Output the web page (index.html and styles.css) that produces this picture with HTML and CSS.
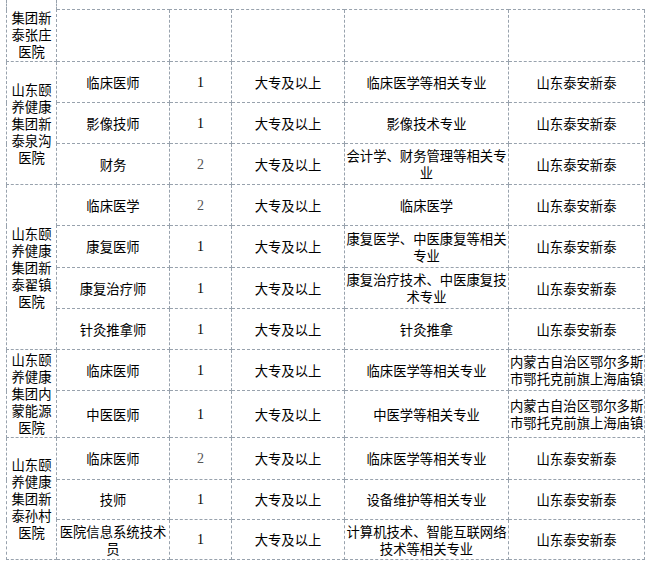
FILE: index.html
```html
<!DOCTYPE html>
<html lang="zh-CN">
<head>
<meta charset="utf-8">
<title>招聘岗位表</title>
<link rel="stylesheet" href="styles.css">
</head>
<body>
<table class="jobs">
  <colgroup>
    <col class="c1"><col class="c2"><col class="c3"><col class="c4"><col class="c5"><col class="c6">
  </colgroup>
  <tr class="r10">
    <td class="org org-top" rowspan="2">集团新<br>泰张庄<br>医院</td>
    <td class="gap" colspan="5"></td>
  </tr>
  <tr class="r52"><td></td><td></td><td></td><td></td><td></td></tr>

  <tr class="r41">
    <td class="org" rowspan="3">山东颐<br>养健康<br>集团新<br>泰泉沟<br>医院</td>
    <td>临床医师</td><td class="num">1</td><td>大专及以上</td><td>临床医学等相关专业</td><td>山东泰安新泰</td>
  </tr>
  <tr class="r41">
    <td>影像技师</td><td class="num">1</td><td>大专及以上</td><td>影像技术专业</td><td>山东泰安新泰</td>
  </tr>
  <tr class="r41">
    <td>财务</td><td class="num two">2</td><td>大专及以上</td><td>会计学、财务管理等相关专<br>业</td><td>山东泰安新泰</td>
  </tr>

  <tr class="r41">
    <td class="org" rowspan="4">山东颐<br>养健康<br>集团新<br>泰翟镇<br>医院</td>
    <td>临床医学</td><td class="num two">2</td><td>大专及以上</td><td>临床医学</td><td>山东泰安新泰</td>
  </tr>
  <tr class="r42">
    <td>康复医师</td><td class="num">1</td><td>大专及以上</td><td>康复医学、中医康复等相关<br>专业</td><td>山东泰安新泰</td>
  </tr>
  <tr class="r41">
    <td>康复治疗师</td><td class="num">1</td><td>大专及以上</td><td>康复治疗技术、中医康复技<br>术专业</td><td>山东泰安新泰</td>
  </tr>
  <tr class="r41">
    <td>针灸推拿师</td><td class="num">1</td><td>大专及以上</td><td>针灸推拿</td><td>山东泰安新泰</td>
  </tr>

  <tr class="r41">
    <td class="org" rowspan="2">山东颐<br>养健康<br>集团内<br>蒙能源<br>医院</td>
    <td>临床医师</td><td class="num">1</td><td>大专及以上</td><td>临床医学等相关专业</td><td>内蒙古自治区鄂尔多斯<br>市鄂托克前旗上海庙镇</td>
  </tr>
  <tr class="r47">
    <td>中医医师</td><td class="num">1</td><td>大专及以上</td><td>中医学等相关专业</td><td>内蒙古自治区鄂尔多斯<br>市鄂托克前旗上海庙镇</td>
  </tr>

  <tr class="r42">
    <td class="org" rowspan="3">山东颐<br>养健康<br>集团新<br>泰孙村<br>医院</td>
    <td>临床医师</td><td class="num two">2</td><td>大专及以上</td><td>临床医学等相关专业</td><td>山东泰安新泰</td>
  </tr>
  <tr class="r40">
    <td>技师</td><td class="num">1</td><td>大专及以上</td><td>设备维护等相关专业</td><td>山东泰安新泰</td>
  </tr>
  <tr class="r40">
    <td>医院信息系统技术<br>员</td><td class="num">1</td><td>大专及以上</td><td>计算机技术、智能互联网络<br>技术等相关专业</td><td>山东泰安新泰</td>
  </tr>
</table>
</body>
</html>
```

FILE: styles.css
```css
html, body {
  margin: 0;
  padding: 0;
  background: #ffffff;
}

.jobs {
  margin-left: 6px;
  border-collapse: collapse;
  table-layout: fixed;
  width: 639px;
  font-family: "Noto Sans CJK SC", "Noto Sans", sans-serif;
  font-size: 13.33px;
  line-height: 17px;
  color: #000000;
}

.c1 { width: 50px; }
.c2 { width: 113px; }
.c3 { width: 62px; }
.c4 { width: 113px; }
.c5 { width: 164px; }
.c6 { width: 136px; }

.jobs td {
  border: 1px dashed #98a2ad;
  padding: 0 1px;
  text-align: center;
  vertical-align: middle;
  overflow: hidden;
  white-space: nowrap;
}

.jobs td.org-top {
  border-top: none;
  vertical-align: bottom;
  padding-bottom: 1px;
}

.jobs td.gap {
  border-top: none;
  border-left: none;
  border-right: none;
}

.jobs td.num {
  font-family: "Liberation Serif", "DejaVu Serif", serif;
  font-size: 14px;
}

.jobs td.two {
  color: #555555;
}

.r10 td { height: 9px; padding-top: 0; padding-bottom: 0; }
.r52 td { height: 51px; }
.r40 td { height: 39px; }
.r41 td { height: 40px; }
.r42 td { height: 41px; }
.r47 td { height: 46px; }
```
